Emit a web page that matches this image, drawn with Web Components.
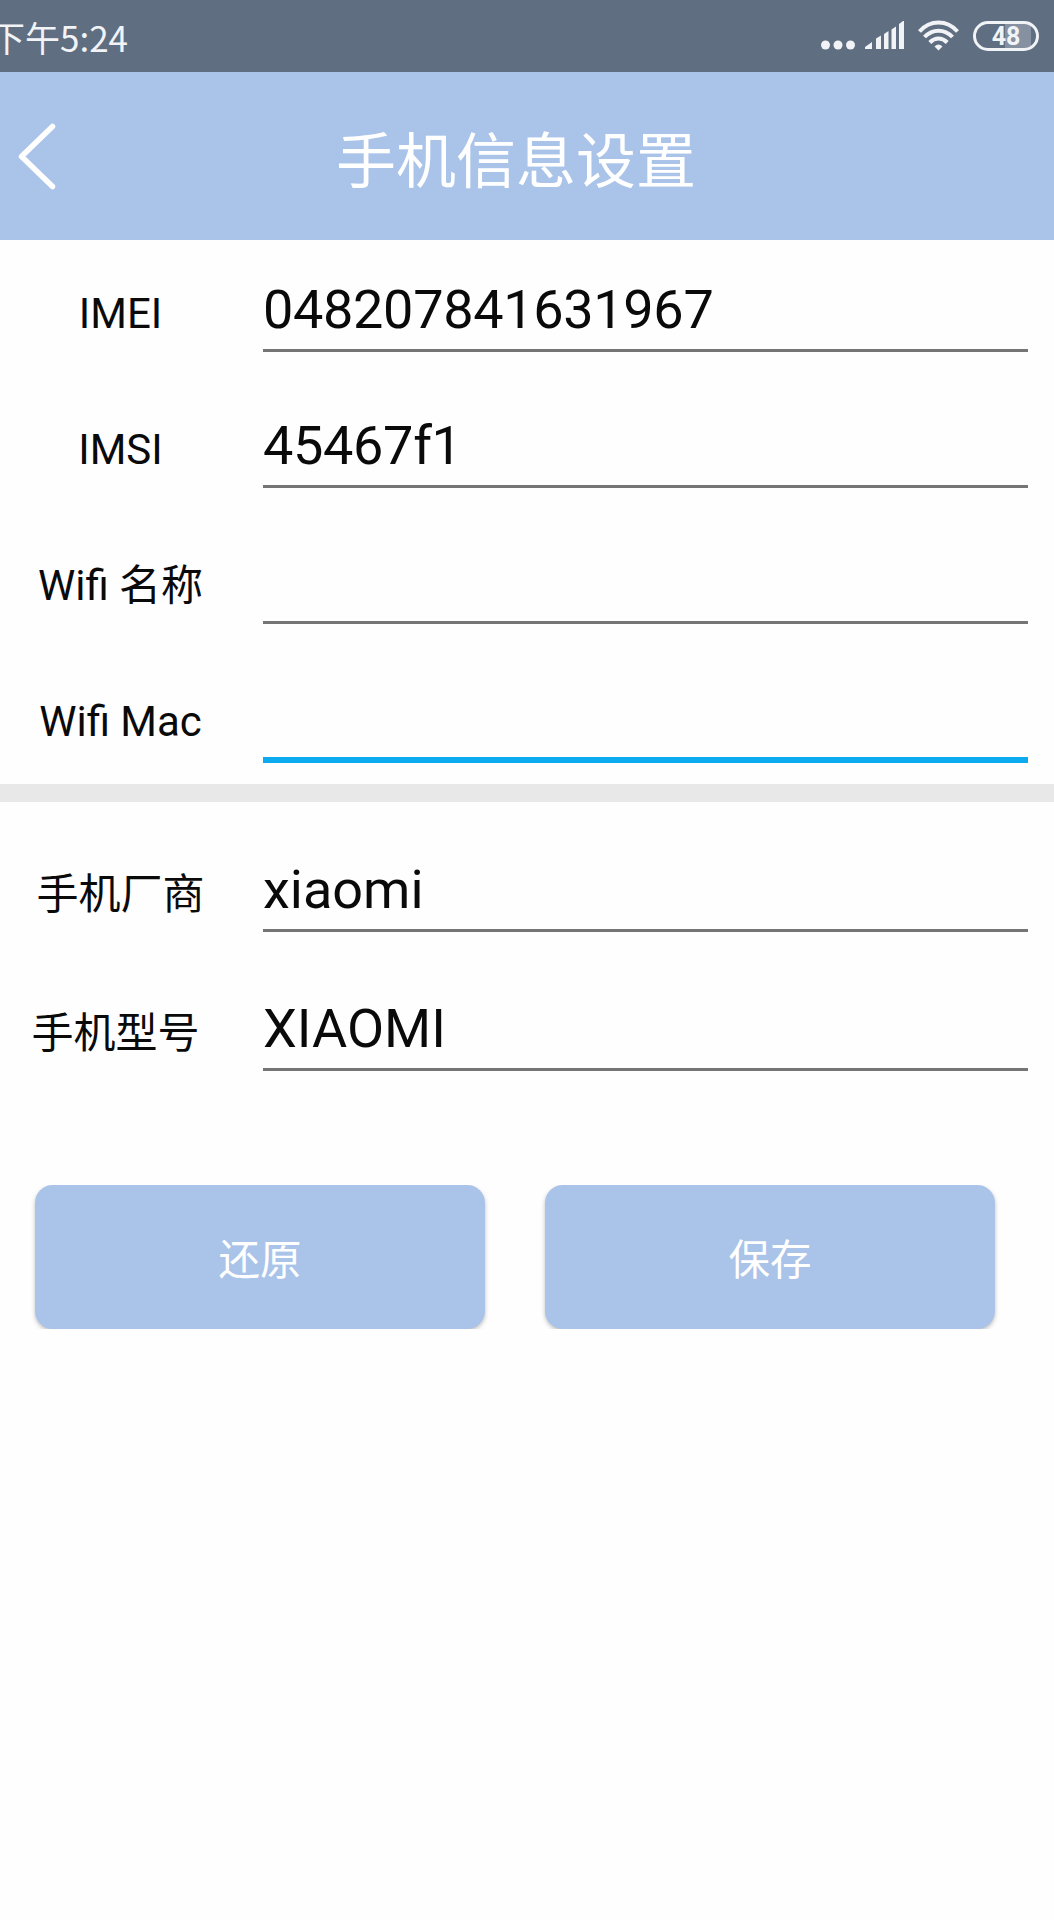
<!DOCTYPE html>
<html lang="zh-CN">
<head>
<meta charset="UTF-8">
<title>手机信息设置</title>
<style>
    body {
        margin: 0;
        background: #fefefe;
        color: #0a0a0a;
        font-family: Roboto, "Noto Sans CJK SC", sans-serif;
    }
</style>
</head>
<body>
<phone-page>
    <status-bar slot="top" battery="48">下午5:24</status-bar>
    <title-bar slot="top">手机信息设置</title-bar>
    <field-group>
        <form-field label="IMEI" numeric>048207841631967</form-field>
        <form-field label="IMSI" numeric>45467f1</form-field>
        <form-field label="Wifi 名称"></form-field>
        <form-field label="Wifi Mac" focused></form-field>
    </field-group>
    <field-group separated>
        <form-field label="手机厂商">xiaomi</form-field>
        <form-field label="手机型号" narrow>XIAOMI</form-field>
    </field-group>
    <button-row>
        <action-button>还原</action-button>
        <action-button>保存</action-button>
    </button-row>
</phone-page>

<script>
class PhonePage extends HTMLElement {
    constructor() {
        super();
        this.attachShadow({ mode: 'open' });
        this.shadowRoot.innerHTML = `
            <style>
                :host {
                    display: flex;
                    flex-direction: column;
                    min-height: 1920px;
                }
                main {
                    display: flex;
                    flex-direction: column;
                }
            </style>
            <slot name="top"></slot>
            <main><slot></slot></main>
        `;
    }
}

customElements.define('phone-page', PhonePage);

class StatusBar extends HTMLElement {
    constructor() {
        super();
        this.attachShadow({ mode: 'open' });
        this.shadowRoot.innerHTML = `
            <style>
                :host {
                    display: flex;
                    justify-content: space-between;
                    height: 72px;
                    overflow: hidden;
                    background: #5f6e80;
                    color: #f1f3f7;
                }
                .time {
                    margin-left: -10px;
                    font: 35px/74px "Noto Sans CJK SC", sans-serif;
                    white-space: nowrap;
                }
                .icons {
                    display: flex;
                    align-items: flex-start;
                    padding: 20px 15px 0 0;
                }
                svg {
                    display: block;
                    fill: currentColor;
                }
                .signal {
                    margin: 1px 13px 0 10px;
                }
                .dots {
                    margin-top: 20px;
                }
                .wifi {
                    margin-right: 14px;
                }
                .battery {
                    box-sizing: border-box;
                    width: 66px;
                    height: 30px;
                    margin-top: 1px;
                    border: 3px solid currentColor;
                    border-radius: 15px;
                    background: linear-gradient(90deg, transparent 48%, #8590a1 48%, #8590a1 92%, transparent 92%);
                    font: bold 25px/25px Roboto, sans-serif;
                    text-align: center;
                }
            </style>
            <span class="time"><slot></slot></span>
            <div class="icons">
                <svg class="dots" width="34" height="10" viewBox="0 0 34 10">
                    <circle cx="4.5" cy="5" r="4.5"/><circle cx="17" cy="5" r="4.5"/><circle cx="29.5" cy="5" r="4.5"/>
                </svg>
                <svg class="signal" width="40" height="28" viewBox="0 0 40 28">
                    <path d="M0 28v-2l7-5v7zM11 28V17.500l5-3V28zM19 28V13l4.500-3v18zM26.500 28V8.500l4.500-3V28zM34 28V3l4-3h1v28z"/>
                </svg>
                <svg class="wifi" width="41" height="31" viewBox="0 0 41 31">
                    <g fill="none" stroke="currentColor" stroke-width="4">
                        <path d="M1.500 11.500C12-.5 29-.5 39.500 11.500"/>
                        <path d="M6.500 17C14.500 8.500 26.500 8.500 34.500 17"/>
                        <path d="M11.800 22.500C17 17.200 24 17.200 29.200 22.500"/>
                    </g>
                    <path d="M16.500 26.500Q20.500 22.500 24.500 26.500L20.500 30.500z"/>
                </svg>
                <div class="battery"></div>
            </div>
        `;
    }

    connectedCallback() {
        this.shadowRoot.querySelector('.battery').textContent = this.getAttribute('battery');
    }
}

customElements.define('status-bar', StatusBar);

class TitleBar extends HTMLElement {
    constructor() {
        super();
        this.attachShadow({ mode: 'open' });
        this.shadowRoot.innerHTML = `
            <style>
                :host {
                    display: grid;
                    grid-template-columns: 75px 1fr 97px;
                    align-items: center;
                    height: 168px;
                    background: #aac3e9;
                    color: #fff;
                }
                svg {
                    display: block;
                    margin-left: 17px;
                }
                h1 {
                    margin: 0;
                    padding-top: 1px;
                    font: 400 60px/80px "Noto Sans CJK SC", sans-serif;
                    text-align: center;
                }
            </style>
            <svg width="42" height="68" viewBox="0 0 42 68" fill="none" stroke="currentColor" stroke-width="5.5" stroke-linecap="round" stroke-linejoin="round">
                <path d="M35.500 4.500L4.500 34.500l31 30"/>
            </svg>
            <h1><slot></slot></h1>
        `;
    }
}

customElements.define('title-bar', TitleBar);

class FieldGroup extends HTMLElement {
    constructor() {
        super();
        this.attachShadow({ mode: 'open' });
        this.shadowRoot.innerHTML = `
            <style>
                :host {
                    display: flex;
                    flex-direction: column;
                    --row-height: 136px;
                }
                :host([separated]) {
                    padding-top: 18px;
                    border-top: 18px solid #e8e8e8;
                    --row-height: 139px;
                    --label-top: 50px;
                }
            </style>
            <slot></slot>
        `;
    }
}

customElements.define('field-group', FieldGroup);

class FormField extends HTMLElement {
    constructor() {
        super();
        this.attachShadow({ mode: 'open' });
        this.shadowRoot.innerHTML = `
            <style>
                :host {
                    display: flex;
                    height: var(--row-height);
                }
                label {
                    width: 241px;
                    margin-right: 22px;
                    padding-top: var(--label-top, 49px);
                    font-size: 42px;
                    line-height: 50px;
                    text-align: center;
                    white-space: nowrap;
                }
                :host([narrow]) label {
                    width: 231px;
                    margin-right: 32px;
                }
                .value {
                    box-sizing: border-box;
                    width: 765px;
                    height: 112px;
                    padding-top: 38px;
                    border-bottom: 3px solid #757575;
                    font-size: 54px;
                    line-height: 64px;
                }
                :host([numeric]) .value {
                    letter-spacing: -0.32px;
                }
                :host([focused]) .value {
                    height: 115px;
                    border-bottom: 6px solid #0caaee;
                }
            </style>
            <label></label>
            <div class="value"><slot></slot></div>
        `;
    }

    connectedCallback() {
        this.shadowRoot.querySelector('label').textContent = this.getAttribute('label');
    }
}

customElements.define('form-field', FormField);

class ButtonRow extends HTMLElement {
    constructor() {
        super();
        this.attachShadow({ mode: 'open' });
        this.shadowRoot.innerHTML = `
            <style>
                :host {
                    display: flex;
                    gap: 60px;
                    padding: 87px 59px 0 35px;
                }
            </style>
            <slot></slot>
        `;
    }
}

customElements.define('button-row', ButtonRow);

class ActionButton extends HTMLElement {
    constructor() {
        super();
        this.attachShadow({ mode: 'open' });
        this.shadowRoot.innerHTML = `
            <style>
                :host {
                    display: flex;
                    flex: 1;
                    height: 144px;
                    /* the shadow shows at the sides only */
                    clip-path: inset(0 -6px 0 -6px);
                }
                button {
                    flex: 1;
                    padding: 0 0 1px;
                    border: 0;
                    border-radius: 18px;
                    background: #aac3e9;
                    box-shadow: 0 2px 4px rgba(0, 0, 0, 0.25);
                    color: #fff;
                    font: 41.500px "Noto Sans CJK SC", sans-serif;
                }
            </style>
            <button type="button"><slot></slot></button>
        `;
    }
}

customElements.define('action-button', ActionButton);
</script>
</body>
</html>
